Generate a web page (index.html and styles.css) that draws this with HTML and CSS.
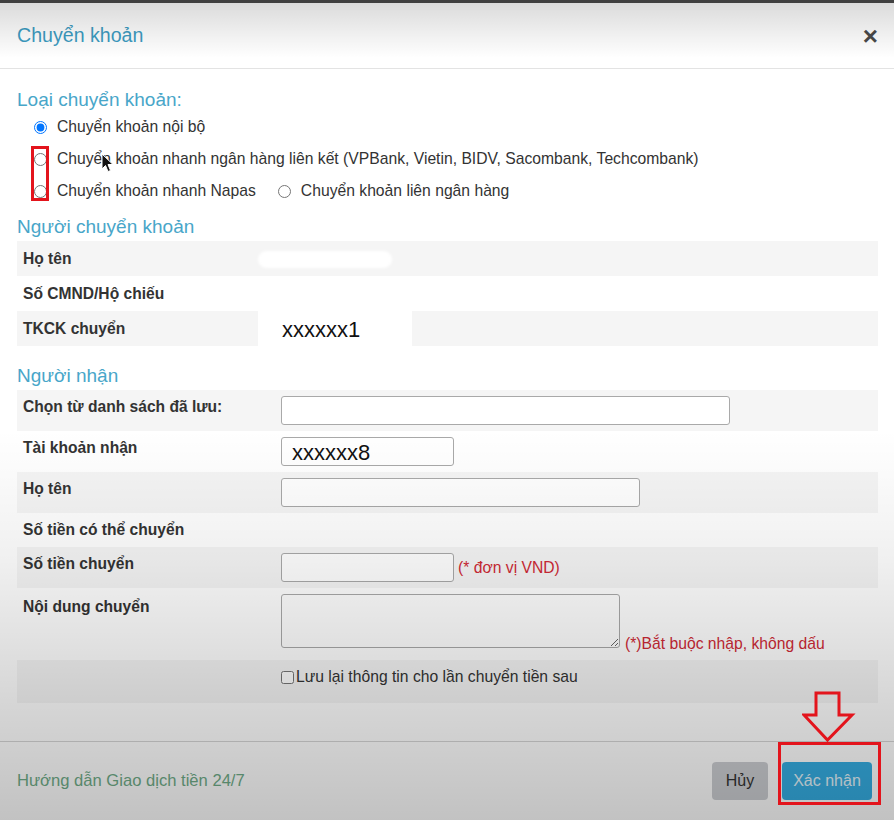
FILE: index.html
```html
<!DOCTYPE html>
<html lang="vi">
<head>
    <meta charset="UTF-8">
    <meta name="viewport" content="width=device-width, initial-scale=1.0">
    <title>Chuyển khoản</title>
    <link rel="stylesheet" href="styles.css">
</head>
<body>
    <div class="modal">
        <div class="modal-header">
            <h4 class="modal-title">Chuyển khoản</h4>
            <button class="close" type="button">&times;</button>
        </div>

        <div class="modal-body">
            <h5 class="section-title">Loại chuyển khoản:</h5>
            <div class="radio-list">
                <label class="radio-row"><input type="radio" name="loai" checked>Chuyển khoản nội bộ</label>
                <label class="radio-row"><input type="radio" name="loai">Chuyển khoản nhanh ngân hàng liên kết (VPBank, Vietin, BIDV, Sacombank, Techcombank)</label>
                <div class="radio-row">
                    <label><input type="radio" name="loai">Chuyển khoản nhanh Napas</label>
                    <label class="radio-second"><input type="radio" name="loai">Chuyển khoản liên ngân hàng</label>
                </div>
            </div>

            <h5 class="section-title">Người chuyển khoản</h5>
            <div class="info-table sender">
                <div class="info-row striped">
                    <div class="info-label">Họ tên</div>
                    <div class="info-value"><span class="smudge"></span></div>
                </div>
                <div class="info-row">
                    <div class="info-label">Số CMND/Hộ chiếu</div>
                    <div class="info-value"></div>
                </div>
                <div class="info-row striped">
                    <div class="info-label">TKCK chuyển</div>
                    <div class="info-value"><span class="cover big-text">xxxxxx1</span></div>
                </div>
            </div>

            <h5 class="section-title">Người nhận</h5>
            <div class="info-table receiver">
                <div class="form-row striped">
                    <div class="info-label">Chọn từ danh sách đã lưu:</div>
                    <div class="form-value"><input class="input input-xl" type="text"></div>
                </div>
                <div class="form-row">
                    <div class="info-label">Tài khoản nhận</div>
                    <div class="form-value"><input class="input input-sm big-text" type="text" value="xxxxxx8"></div>
                </div>
                <div class="form-row striped">
                    <div class="info-label">Họ tên</div>
                    <div class="form-value"><input class="input input-md" type="text"></div>
                </div>
                <div class="form-row row-balance">
                    <div class="info-label">Số tiền có thể chuyển</div>
                    <div class="form-value"><span class="balance-cover"></span></div>
                </div>
                <div class="form-row striped">
                    <div class="info-label">Số tiền chuyển</div>
                    <div class="form-value"><input class="input input-sm" type="text"><span class="note">(* đơn vị VND)</span></div>
                </div>
                <div class="form-row row-content">
                    <div class="info-label">Nội dung chuyển</div>
                    <div class="form-value"><textarea class="input textarea"></textarea><span class="note">(*)Bắt buộc nhập, không dấu</span></div>
                </div>
                <div class="form-row striped row-save">
                    <div class="info-label"></div>
                    <div class="form-value"><label class="save"><input type="checkbox">Lưu lại thông tin cho lần chuyển tiền sau</label></div>
                </div>
            </div>
        </div>

        <div class="modal-footer">
            <a class="guide" href="#">Hướng dẫn Giao dịch tiền 24/7</a>
            <div class="actions">
                <button class="btn btn-cancel" type="button">Hủy</button>
                <button class="btn btn-confirm" type="button">Xác nhận</button>
            </div>
        </div>
    </div>

    <!-- lop toi dan xuong duoi cua anh chup -->
    <div class="shade"></div>

    <!-- danh dau mau do -->
    <div class="mark mark-radio"></div>
    <div class="mark mark-confirm"></div>
    <svg class="mark-arrow" width="54" height="52" viewBox="0 0 54 52">
        <path d="M14 2 H37 V24 H50 L25.5 49 L2 24 H14 Z" fill="none" stroke="#e3141c" stroke-width="3" stroke-linejoin="miter"/>
    </svg>
    <svg class="cursor" width="14" height="20" viewBox="0 0 14 20">
        <path d="M1 1 V16 L4.5 12.5 L7 18.5 L9.5 17.5 L7 11.5 H12 Z" fill="#111" stroke="#fff" stroke-width="1"/>
    </svg>
</body>
</html>
```

FILE: styles.css
```css
:root {
    --xanh-tieu-de: #3d9cc2;
    --xanh-muc: #48a6c9;
    --chu: #333333;
    --soc: #f5f5f5;
    --do: #cf2a36;
    --vien: #a9a9a9;
}

body {
    margin: 0;
    background: #ffffff;
    font-family: "Liberation Sans", Arial, sans-serif;
    color: var(--chu);
    width: 894px;
    height: 820px;
    overflow: hidden;
    position: relative;
}

.modal {
    border-top: 3px solid #4b4b4b;
    background: #ffffff;
}

.modal-header {
    display: flex;
    align-items: center;
    justify-content: space-between;
    padding: 0 16px 0 17px;
    border-bottom: 1px solid #e3e3e3;
    box-sizing: border-box;
    height: 66px;
}

.modal-title {
    margin: 0;
    font-size: 19.6px;
    font-weight: normal;
    color: var(--xanh-tieu-de);
}

.close {
    border: none;
    background: none;
    padding: 0;
    font-family: "Liberation Sans", Arial, sans-serif;
    font-size: 26px;
    font-weight: bold;
    line-height: 1;
    color: #4a4a4a;
    cursor: pointer;
}

.modal-body {
    padding: 20px 16px 38px 17px;
}

.section-title {
    margin: 0;
    font-size: 19px;
    line-height: 22px;
    font-weight: normal;
    color: var(--xanh-muc);
}

.radio-list {
    padding-left: 17px;
    margin-bottom: 9px;
}

.radio-row {
    display: flex;
    align-items: center;
    height: 32px;
    font-size: 15.7px;
}

.radio-row label {
    display: flex;
    align-items: center;
}

.radio-row input {
    width: 13px;
    height: 13px;
    margin: 0 10px 0 0;
}

.radio-second {
    margin-left: 22px;
}

.info-table {
    margin: 3px 0 19px;
}

.info-table.receiver {
    margin-bottom: 0;
}

.info-row {
    display: flex;
    align-items: center;
    height: 35px;
}

.striped {
    background: var(--soc);
}

.info-label {
    flex: none;
    width: 264px;
    padding-left: 6px;
    box-sizing: border-box;
    font-size: 15.6px;
    line-height: 18px;
    font-weight: bold;
}

.sender .info-label {
    width: 241px;
}

.info-value {
    align-self: stretch;
    display: flex;
    align-items: center;
}

.smudge {
    width: 130px;
    height: 13px;
    border-radius: 8px;
    background: #ffffff;
    box-shadow: 0 0 3px 2px #ffffff;
    margin: 2px 0 0 2px;
}

.cover {
    background: #ffffff;
    width: 130px;
    padding: 6px 0 3px 24px;
    align-self: stretch;
    display: flex;
    align-items: center;
}

.big-text {
    font-size: 22px;
    color: #111111;
}

.form-row {
    display: flex;
    align-items: flex-start;
    padding: 6px 0;
}

.form-row .info-label {
    margin-top: 2px;
}

.form-value {
    display: flex;
    align-items: flex-end;
}

.input {
    height: 29px;
    border: 1px solid var(--vien);
    border-radius: 3px;
    background: #ffffff;
    box-sizing: border-box;
    font-family: "Liberation Sans", Arial, sans-serif;
    margin: 0;
}

.input-xl {
    width: 449px;
}

.input-md {
    width: 359px;
}

.input-sm {
    width: 173px;
    padding: 0 10px;
}

.input-sm.big-text {
    padding-top: 3px;
}

.textarea {
    width: 339px;
    height: 54px;
    resize: both;
}

.note {
    font-size: 15.7px;
    color: var(--do);
    margin-left: 4px;
    line-height: 18px;
}

.form-row .input-sm + .note {
    align-self: center;
}

.row-balance {
    padding: 3px 0 0;
    height: 34px;
    box-sizing: border-box;
}

.row-balance .info-label {
    margin-top: 5px;
}

.balance-cover {
    display: block;
    width: 131px;
    height: 31px;
    background: #ffffff;
}

.row-content {
    padding: 6px 0 8px;
    height: 72px;
    box-sizing: border-box;
}

.row-content .info-label {
    margin-top: 4px;
}

.row-content .note {
    margin: 0 0 -5px 5px;
}

.row-save {
    height: 43px;
    box-sizing: border-box;
    padding-top: 8px;
}

.save {
    display: flex;
    align-items: center;
    font-size: 15.7px;
    line-height: 18px;
}

.save input {
    width: 13px;
    height: 13px;
    margin: 0 2px 0 0;
}

.modal-footer {
    border-top: 1px solid #d6d6d6;
    height: 79px;
    padding: 0 22px 0 17px;
    display: flex;
    align-items: center;
    justify-content: space-between;
    box-sizing: border-box;
}

.guide {
    font-size: 16.6px;
    color: #6fac88;
    text-decoration: none;
}

.actions {
    display: flex;
    gap: 14px;
}

.btn {
    height: 38px;
    border: none;
    border-radius: 4px;
    font-family: "Liberation Sans", Arial, sans-serif;
    font-size: 16px;
    cursor: pointer;
}

.btn-cancel {
    width: 56px;
    background: #ccced2;
    color: #333333;
}

.btn-confirm {
    width: 90px;
    background: #35ade2;
    color: #e4f4fb;
}

.shade {
    position: absolute;
    inset: 0;
    pointer-events: none;
    background: linear-gradient(to bottom,
        rgba(0, 0, 0, 0.15) 0px,
        rgba(0, 0, 0, 0) 58px,
        rgba(0, 0, 0, 0) 430px,
        rgba(0, 0, 0, 0.06) 560px,
        rgba(0, 0, 0, 0.16) 700px,
        rgba(0, 0, 0, 0.24) 820px);
}

.mark {
    position: absolute;
    border: 3px solid #e3141c;
    box-sizing: border-box;
}

.mark-radio {
    left: 31px;
    top: 146px;
    width: 18px;
    height: 55px;
}

.mark-confirm {
    left: 778px;
    top: 742px;
    width: 103px;
    height: 63px;
}

.mark-arrow {
    position: absolute;
    left: 802px;
    top: 691px;
}

.cursor {
    position: absolute;
    left: 101px;
    top: 153px;
}
```
